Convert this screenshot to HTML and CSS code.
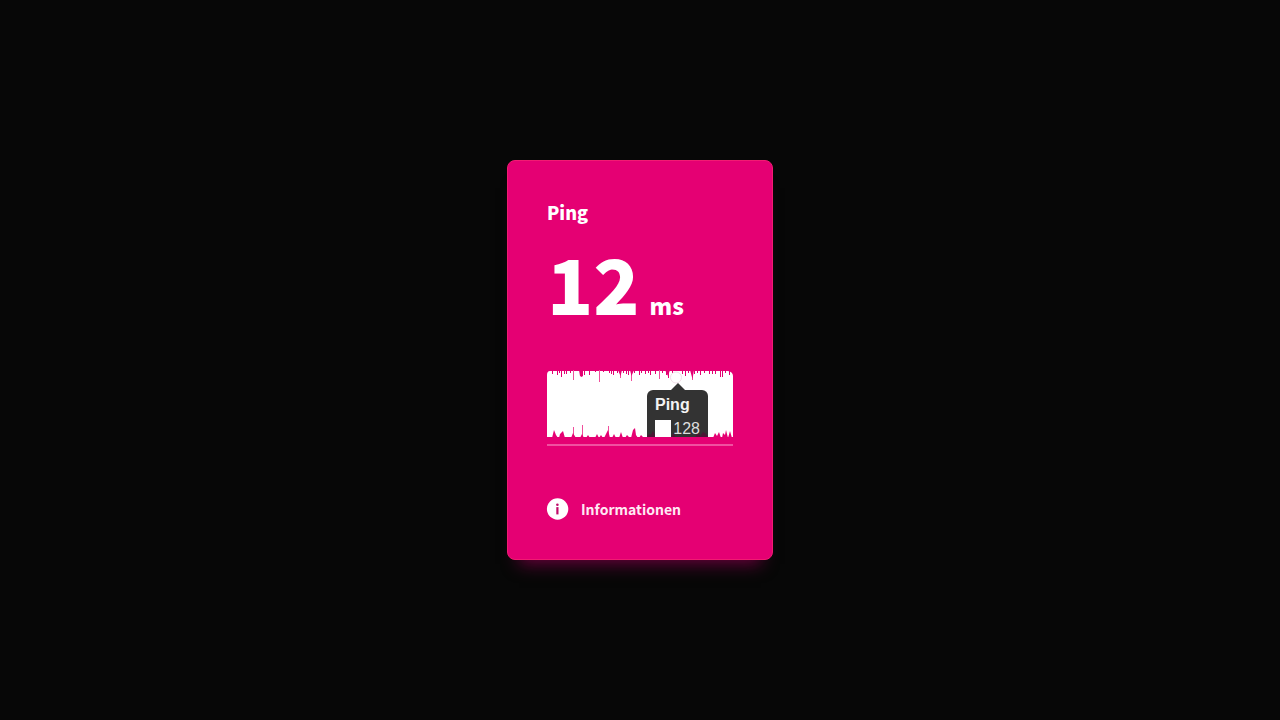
FILE: index.html
```
<!DOCTYPE html>
<html lang="de">
<head>
<meta charset="utf-8">
<meta name="viewport" content="width=device-width, initial-scale=1">
<title>Ping</title>
<link rel="stylesheet" href="styles.css">
</head>
<body>
<main class="card">
  <h1 class="title">Ping</h1>
  <p class="reading"><span class="value">12</span><span class="unit">ms</span></p>
  <div class="chart">
    <svg class="wave" viewBox="0 0 186 68" preserveAspectRatio="none" aria-hidden="true">
      <path fill="#fff" d="M0 68V5Q0 1 3 1H181Q186 2 186 6V68Z"/>
      <path fill="none" stroke="#e50073" d="M5.5 0V4M10.5 0V5M12.5 0V3M14.5 0V7M17.5 0V4M19.5 0V4M23.5 0V3M37.5 0V5M42.5 0V5M48.5 0V2M56.5 0V2M62.5 0V3M64.5 0V4M66.5 0V5M70.5 0V3M76.5 0V3M79.5 0V4M81.5 0V5M87.5 0V3M92.5 0V5M94.5 0V3M98.5 0V4M101.5 0V3M103.5 0V5M108.5 0V4M115.5 0V3M119.5 0V5M121.5 0V8M125.5 0V3M135.5 0V4M138.5 0V6M141.5 0V3M147.5 0V4M150.5 0V3M153.5 0V5M157.5 0V3M162.5 0V4M165.5 0V4M168.5 0V4M173.5 0V7M175.5 0V7M178.5 0V3M182.5 0V5"/>
      <path fill="none" stroke="#f04e9c" d="M26.5 0V10M52.5 0V12M73.5 0V8M84.5 0V11M112.5 0V9M145.5 0V10M26.5 65V57M35.5 68V55M61.5 68V56"/>
      <path fill="#e50073" d="M32 0H36V6L34.5 7L33 6ZM71 0H75L73.5 6ZM83 0H87L84.5 6ZM143 0H147L145.5 9ZM118 0H123L121 6ZM5 68L7 60L9 65L11 68ZM12 68L13 64L16 61L18 68ZM24 68L26 63L29 68ZM33 68L35 64L37 68ZM39 68L41 65L43 68ZM48 68L50 64L52 68ZM52 68L54 65L56 68ZM57 68L59 64L61 60L63 68ZM65 68L67 64L69 68ZM72 68L74 62L76 68ZM78 68L80 65L83 68ZM84 68L86 60L88 58L89 65L91 68ZM92 68L94 65L97 68ZM100 68L102 63L105 68ZM166 68L168 63L170 66L172 62L174 68ZM175 68L176 63L178 65L179 60L181 68ZM181 68L183 61L185 68Z"/>
      <path fill="#e50073" d="M0 67H186V68H0Z"/>
      <circle cx="129" cy="7.5" r="5.5" fill="#fff" stroke="#f2dfea" stroke-width="1"/>
    </svg>
    <div class="tooltip">
      <strong class="tooltip-title">Ping</strong>
      <span class="tooltip-row"><span class="swatch"></span>128</span>
      <svg class="tooltip-spikes" viewBox="0 0 62 8" preserveAspectRatio="none" aria-hidden="true"><path fill="#4b1634" d="M0 8L2 5L4 6L6 2L8 6V8ZM25 8L27 4L29 8ZM49 8L52 4L54 7L57 3L60 5L62 8Z"/></svg>
    </div>
  </div>
  <button class="info" type="button">
    <svg class="info-icon" viewBox="0 0 22 22" aria-hidden="true">
      <circle cx="10.6" cy="11" r="10.7" fill="#fff"/>
      <circle cx="10.4" cy="6.7" r="1.3" fill="#c00b69"/>
      <path fill="#c00b69" d="M9.3 9.1h2.2v7.3H9.3z"/>
    </svg>
    <span>Informationen</span>
  </button>
</main>
</body>
</html>
```
FILE: styles.css
```
* {
  box-sizing: border-box;
}

body {
  margin: 0;
  min-height: 100vh;
  display: flex;
  align-items: center;
  justify-content: center;
  background: #070707;
  color: #fff;
  font-family: "Noto Sans CJK JP", "Noto Sans", sans-serif;
}

.card {
  width: 100%;
  max-width: 266px;
  padding: 39px;
  border: 1px solid #f21b72;
  border-radius: 8px;
  background: #e50073;
  box-shadow: 0 16px 16px -12px #6a003c;
}

.title {
  margin: 0;
  font-size: 18px;
  line-height: 24px;
  font-weight: 900;
}

.reading {
  display: flex;
  align-items: baseline;
  gap: 10px;
  margin: 14px 0 0;
}

.value {
  font-size: 76px;
  line-height: 88px;
  font-weight: 900;
}

.unit {
  font-size: 23px;
  line-height: 24px;
  font-weight: 900;
}

.chart {
  position: relative;
  height: 76px;
  margin-top: 44px;
  border-bottom: 2px solid #f050a0;
}

.wave {
  display: block;
  width: 100%;
  height: 68px;
}

.tooltip {
  position: absolute;
  top: 20px;
  left: 100px;
  width: 61px;
  height: 47px;
  padding: 5px 8px 0;
  border-radius: 6px 6px 0 0;
  background: #333;
  font-family: "Liberation Sans", Arial, sans-serif;
  font-size: 16px;
  line-height: 20px;
}

.tooltip::before {
  content: "";
  position: absolute;
  top: -7px;
  left: 24px;
  border: solid transparent;
  border-width: 0 7px 7px;
  border-bottom-color: #333;
}

.tooltip-title {
  display: block;
  color: #f4f4f4;
}

.tooltip-row {
  position: relative;
  z-index: 1;
  display: flex;
  gap: 2px;
  height: 22px;
  padding-top: 4px;
  overflow: hidden;
  color: #ddd;
}

.swatch {
  width: 17px;
  height: 18px;
  margin-top: 1px;
  background: #fff;
}

.tooltip-spikes {
  position: absolute;
  left: 0;
  bottom: 0;
  width: 100%;
  height: 8px;
}

.info {
  display: flex;
  align-items: center;
  gap: 12px;
  margin: 52px 0 0;
  padding: 0;
  border: 0;
  background: none;
  color: #ffe9f4;
  font: 700 14px/22px "Noto Sans CJK JP", "Noto Sans", sans-serif;
  cursor: pointer;
}

.info-icon {
  width: 22px;
  height: 22px;
  overflow: visible;
}
```
